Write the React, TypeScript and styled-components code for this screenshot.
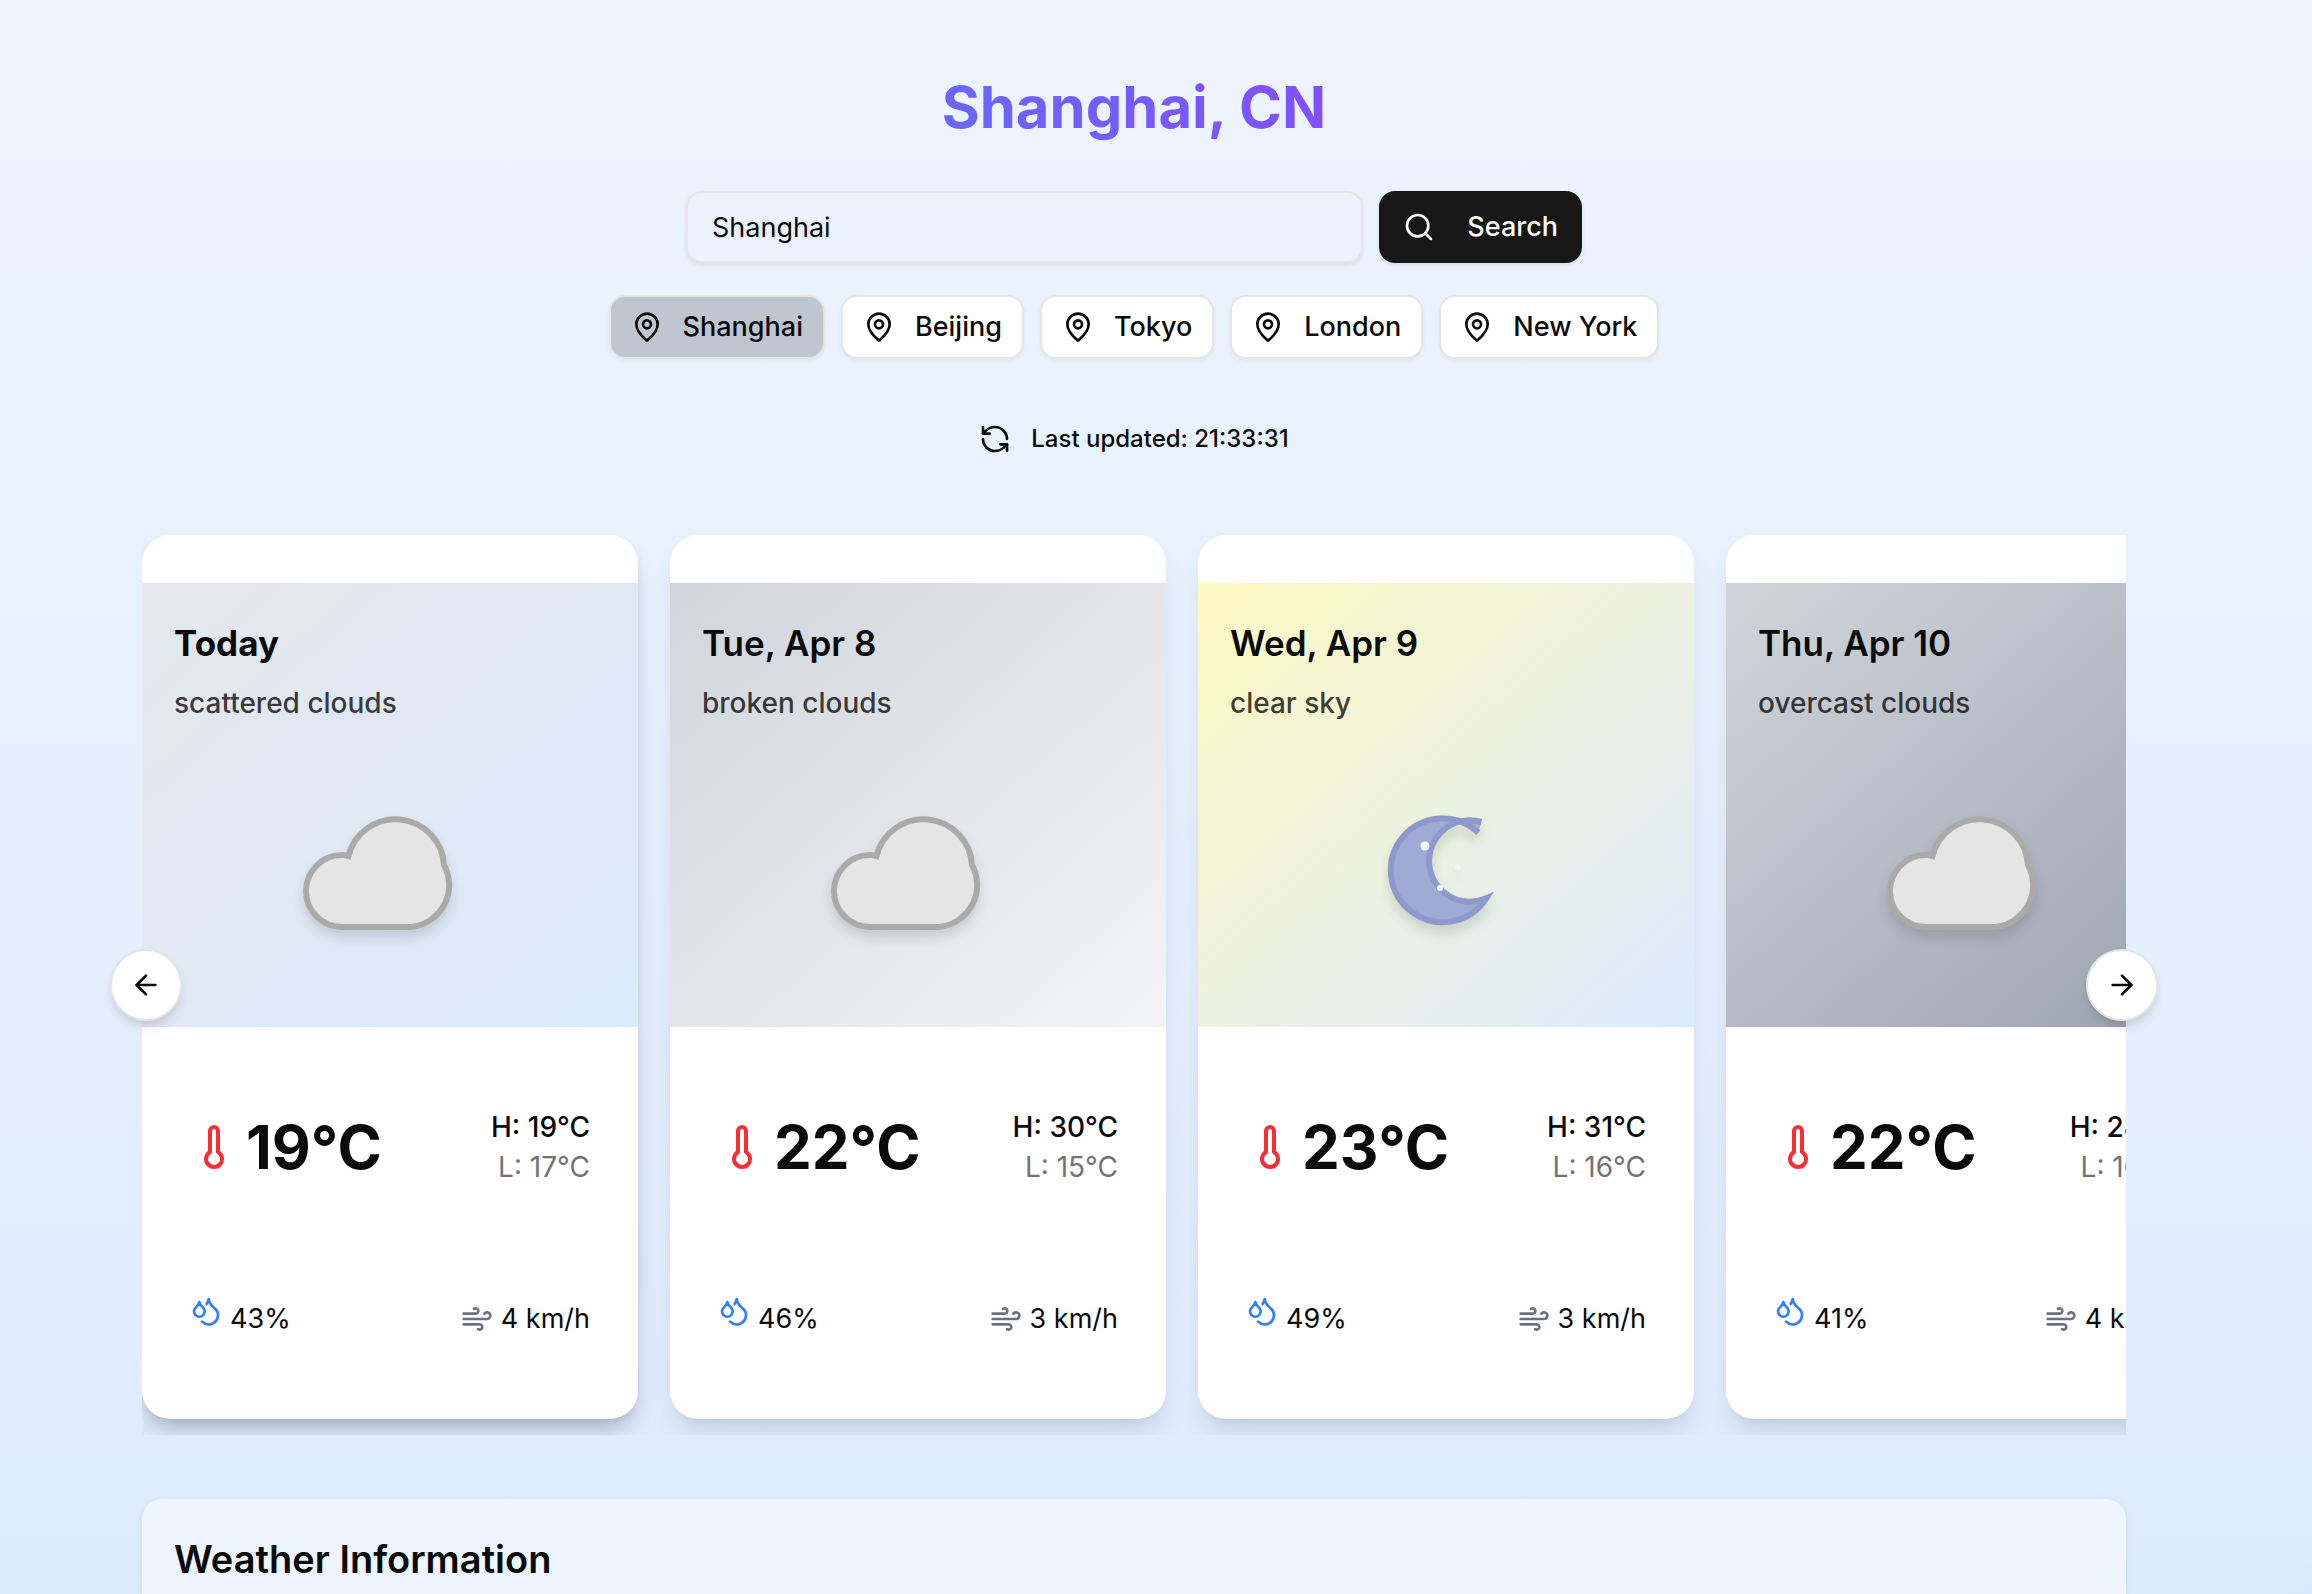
import React, { useRef, useState } from "react";
import styled, { createGlobalStyle, css } from "styled-components";
import {
  ArrowLeft,
  ArrowRight,
  Droplets,
  MapPin,
  RefreshCcw,
  Search,
  Thermometer,
  Wind,
} from "lucide-react";

const GlobalStyle = createGlobalStyle`
  *, *::before, *::after { box-sizing: border-box; }
  body {
    margin: 0;
    color: #0a0a0a;
    font-family: Inter, "Liberation Sans", sans-serif;
    font-size: 27px;
    line-height: 40px;
  }
  button, input { font: inherit; color: inherit; }
  h1, h2, h3, p { margin: 0; }
  svg { flex-shrink: 0; display: block; }
`;

const Page = styled.div`
  min-height: 100vh;
  display: flex;
  flex-direction: column;
  padding-right: 44px;
  background:
    radial-gradient(circle at 100% 100%, rgba(60, 90, 140, 0.03), transparent 60px),
    linear-gradient(to bottom, #eef4ff, #dcebfe);
`;

const Container = styled.main`
  flex: 1;
  width: 100%;
  max-width: 2048px;
  margin: 0 auto;
  padding: 71px 32px 0;
  display: flex;
  flex-direction: column;
`;

const Header = styled.header`
  display: flex;
  flex-direction: column;
  align-items: center;
`;

const Title = styled.h1`
  margin-bottom: 48px;
  font-size: 58px;
  line-height: 72px;
  font-weight: 700;
  color: transparent;
  background: linear-gradient(to right, #6b66ff, #8150ff);
  background-clip: text;
  -webkit-background-clip: text;
`;

const SearchForm = styled.form`
  display: flex;
  gap: 16px;
  width: 100%;
  max-width: 896px;
  margin-bottom: 32px;
`;

const SearchInput = styled.input`
  flex: 1;
  min-width: 0;
  height: 72px;
  padding: 0 24px;
  border: 2px solid #e5e5e5;
  border-radius: 16px;
  background: transparent;
  box-shadow: 0 2px 4px rgba(0, 0, 0, 0.1);
  outline: none;
`;

const buttonBase = css`
  display: inline-flex;
  align-items: center;
  justify-content: center;
  font-weight: 500;
  white-space: nowrap;
  cursor: pointer;
`;

const SearchButton = styled.button`
  ${buttonBase}
  height: 72px;
  padding: 0 24px;
  gap: 32px;
  border: 0;
  border-radius: 16px;
  background: #171717;
  color: #fafafa;
  box-shadow: 0 2px 4px rgba(0, 0, 0, 0.1);
`;

const CityList = styled.nav`
  display: flex;
  flex-wrap: wrap;
  justify-content: center;
  gap: 16px;
  margin-bottom: 48px;
`;

const CityButton = styled.button<{ $active: boolean }>`
  ${buttonBase}
  height: 64px;
  padding: 0 20px;
  gap: 20px;
  border: 2px solid #e5e5e5;
  border-radius: 16px;
  background: ${(p) => (p.$active ? "#c0c6d0" : "#fff")};
  box-shadow: 0 2px 4px rgba(0, 0, 0, 0.05);
`;

const RefreshButton = styled.button`
  ${buttonBase}
  height: 64px;
  padding: 0 20px;
  gap: 20px;
  margin-bottom: 64px;
  border: 0;
  background: transparent;
  font-size: 24px;
`;

const Carousel = styled.section`
  position: relative;
  margin-bottom: 64px;
`;

const Track = styled.div`
  display: flex;
  gap: 32px;
  padding-bottom: 16px;
  overflow-x: auto;
  scrollbar-width: none;
`;

const Card = styled.article<{ $current: boolean }>`
  flex: 0 0 25%;
  padding-top: 48px;
  border-radius: 28px;
  background: #fff;
  box-shadow: ${(p) =>
    p.$current
      ? "0 20px 30px -6px rgba(0, 0, 0, 0.15), 0 8px 16px -6px rgba(0, 0, 0, 0.2)"
      : "0 20px 30px -6px rgba(0, 0, 0, 0.1), 0 8px 12px -8px rgba(0, 0, 0, 0.1)"};
`;

const Sky = styled.div<{ $from: string; $to: string }>`
  padding: 32px;
  background: linear-gradient(to bottom right, ${(p) => p.$from}, ${(p) => p.$to});
`;

const Day = styled.h2<{ $current: boolean }>`
  font-size: 35px;
  line-height: 56px;
  font-weight: ${(p) => (p.$current ? 700 : 600)};
`;

const Condition = styled.p`
  margin: 12px 0 80px;
  font-size: 28px;
  font-weight: 500;
  color: rgba(10, 10, 10, 0.8);
`;

const Picture = styled.svg`
  width: 192px;
  height: 192px;
  margin: 0 auto;
  overflow: visible;
  filter: drop-shadow(0 8px 6px rgba(0, 0, 0, 0.12));
`;

const Temperatures = styled.div`
  display: flex;
  align-items: center;
  justify-content: space-between;
  padding: 80px 48px;
`;

const Current = styled.div`
  display: flex;
  align-items: center;
  gap: 8px;
  font-size: 60px;
  line-height: 80px;
  font-weight: 700;
`;

const Range = styled.div`
  font-size: 28px;
  text-align: right;
`;

const High = styled.p`
  font-weight: 500;
`;

const Low = styled.p`
  color: #737373;
`;

const Details = styled.div`
  display: flex;
  align-items: center;
  justify-content: space-between;
  padding: 28px 48px 76px;
`;

const Detail = styled.div`
  display: flex;
  align-items: center;
  gap: 8px;
`;

const DropIcon = styled(Droplets)`
  margin-bottom: 16px;
`;

const Arrow = styled.button<{ $side: "left" | "right" }>`
  position: absolute;
  top: 50%;
  ${(p) => p.$side}: -32px;
  transform: translateY(-50%);
  ${buttonBase}
  width: 72px;
  height: 72px;
  padding: 0;
  border: 2px solid #e5e5e5;
  border-radius: 50%;
  background: #fff;
  box-shadow: 0 8px 12px -2px rgba(0, 0, 0, 0.1), 0 4px 8px -4px rgba(0, 0, 0, 0.1);
`;

const InfoCard = styled.section`
  flex: 1;
  padding: 32px;
  border-radius: 20px 20px 0 0;
  background: rgba(255, 255, 255, 0.5);
  box-shadow: 0 2px 6px rgba(0, 0, 0, 0.1);
`;

const InfoTitle = styled.h2`
  font-size: 38px;
  line-height: 56px;
  font-weight: 600;
`;

type Forecast = {
  day: string;
  condition: string;
  icon: "cloud" | "moon";
  from: string;
  to: string;
  temp: number;
  high: number;
  low: number;
  humidity: number;
  wind: number;
};

const forecasts: Forecast[] = [
  { day: "Today", condition: "scattered clouds", icon: "cloud", from: "#e5e7eb", to: "#dbeafe", temp: 19, high: 19, low: 17, humidity: 43, wind: 4 },
  { day: "Tue, Apr 8", condition: "broken clouds", icon: "cloud", from: "#d1d5dc", to: "#f3f4f6", temp: 22, high: 30, low: 15, humidity: 46, wind: 3 },
  { day: "Wed, Apr 9", condition: "clear sky", icon: "moon", from: "#fef9c2", to: "#dbeafe", temp: 23, high: 31, low: 16, humidity: 49, wind: 3 },
  { day: "Thu, Apr 10", condition: "overcast clouds", icon: "cloud", from: "#d1d5dc", to: "#99a1af", temp: 22, high: 28, low: 16, humidity: 41, wind: 4 },
];

const cities = ["Shanghai", "Beijing", "Tokyo", "London", "New York"];

function Cloud() {
  return (
    <Picture viewBox="0 0 192 192" aria-hidden="true">
      <path
        d="M54.5 53A48.5 48.5 0 0 1 150 62A42 42 0 0 1 116 124H48A36 36 0 0 1 48 52Q51 52 54.5 53Z"
        fill="#e5e5e5"
        stroke="#aaaaaa"
        strokeWidth="6"
      />
    </Picture>
  );
}

function Moon() {
  return (
    <Picture viewBox="0 0 192 192" aria-hidden="true">
      <path
        d="M128.3 29.7A51.8 51.8 0 1 0 136.2 95.3A40.7 40.7 0 1 1 131.3 19"
        fill="#9fabd4"
        stroke="#8e99cb"
        strokeWidth="6"
      />
      <circle cx="75" cy="43" r="4.5" fill="#f8faf6" />
      <circle cx="90" cy="85" r="3" fill="#f8faf6" />
      <circle cx="108" cy="64" r="3" fill="#f8faf6" opacity="0.7" />
    </Picture>
  );
}

function ForecastCard({ data }: { data: Forecast }) {
  const current = data.day === "Today";
  return (
    <Card $current={current}>
      <Sky $from={data.from} $to={data.to}>
        <Day $current={current}>{data.day}</Day>
        <Condition>{data.condition}</Condition>
        {data.icon === "cloud" ? <Cloud /> : <Moon />}
      </Sky>
      <Temperatures>
        <Current>
          <Thermometer size={48} color="#fb2c36" />
          {data.temp}°C
        </Current>
        <Range>
          <High>H: {data.high}°C</High>
          <Low>L: {data.low}°C</Low>
        </Range>
      </Temperatures>
      <Details>
        <Detail>
          <DropIcon size={32} color="#2b7fff" />
          {data.humidity}%
        </Detail>
        <Detail>
          <Wind size={32} color="#6a7282" />
          {data.wind} km/h
        </Detail>
      </Details>
    </Card>
  );
}

export default function App() {
  const [city, setCity] = useState("Shanghai");
  const [query, setQuery] = useState("Shanghai");
  const track = useRef<HTMLDivElement>(null);
  const scroll = (amount: number) =>
    track.current?.scrollBy({ left: amount, behavior: "smooth" });

  return (
    <Page>
      <GlobalStyle />
      <Container>
        <Header>
          <Title>Shanghai, CN</Title>
          <SearchForm onSubmit={(e) => e.preventDefault()}>
            <SearchInput
              type="text"
              aria-label="City"
              value={query}
              onChange={(e) => setQuery(e.target.value)}
            />
            <SearchButton type="submit">
              <Search size={32} />
              Search
            </SearchButton>
          </SearchForm>
          <CityList aria-label="Cities">
            {cities.map((name) => (
              <CityButton
                key={name}
                type="button"
                $active={name === city}
                onClick={() => {
                  setCity(name);
                  setQuery(name);
                }}
              >
                <MapPin size={32} />
                {name}
              </CityButton>
            ))}
          </CityList>
          <RefreshButton type="button">
            <RefreshCcw size={32} />
            Last updated: 21:33:31
          </RefreshButton>
        </Header>
        <Carousel aria-label="Forecast">
          <Track ref={track}>
            {forecasts.map((f) => (
              <ForecastCard key={f.day} data={f} />
            ))}
          </Track>
          <Arrow type="button" $side="left" aria-label="Previous days" onClick={() => scroll(-528)}>
            <ArrowLeft size={32} />
          </Arrow>
          <Arrow type="button" $side="right" aria-label="Next days" onClick={() => scroll(528)}>
            <ArrowRight size={32} />
          </Arrow>
        </Carousel>
        <InfoCard>
          <InfoTitle>Weather Information</InfoTitle>
        </InfoCard>
      </Container>
    </Page>
  );
}
